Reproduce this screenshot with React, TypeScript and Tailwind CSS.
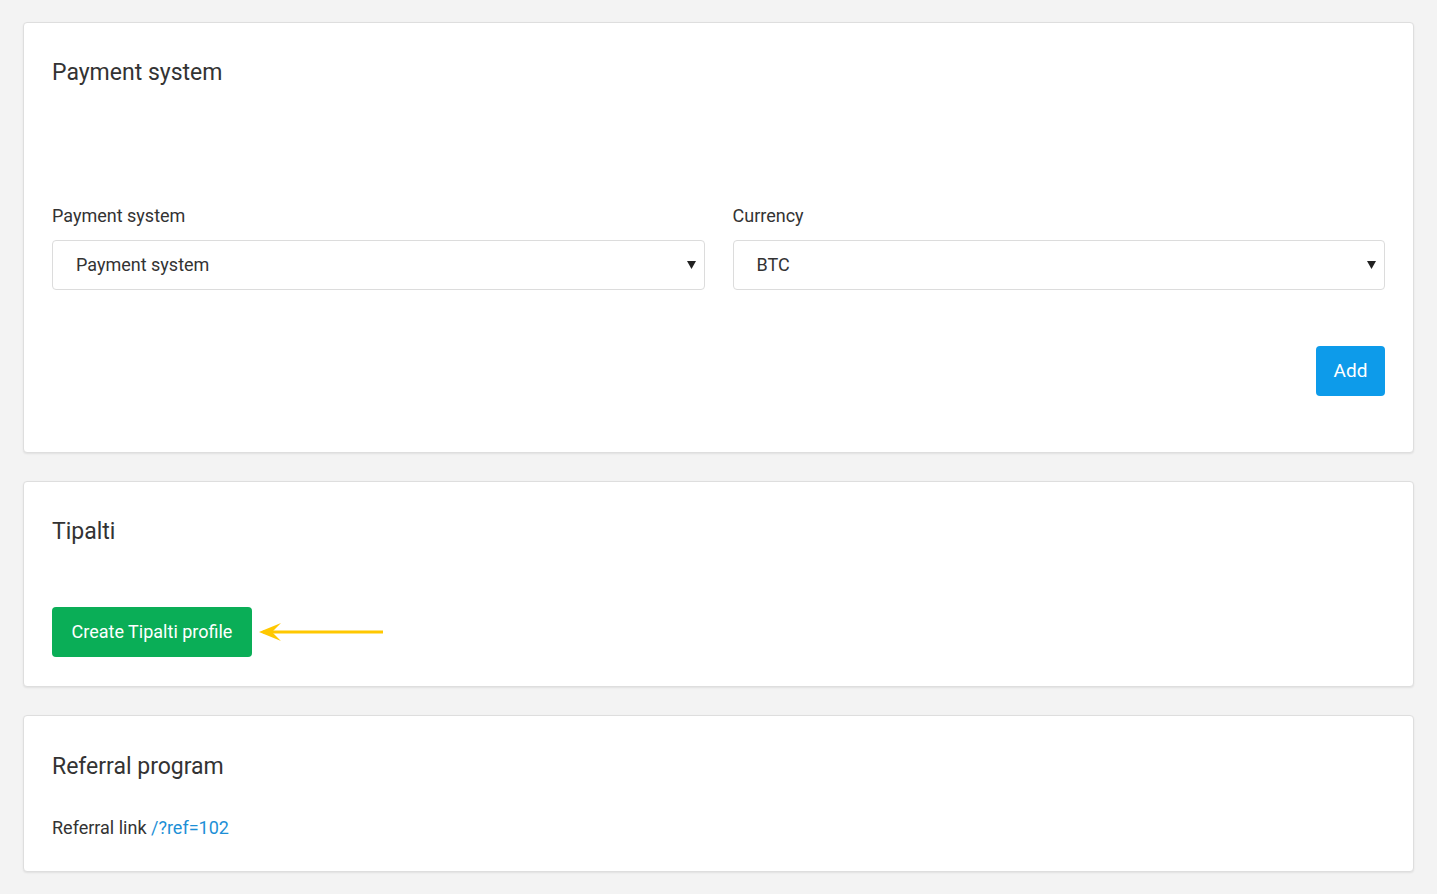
import React from "react";

const font = { fontFamily: "Roboto, 'Open Sans', Arial, sans-serif" };

function Card({ className, children }: { className: string; children: React.ReactNode }) {
  return (
    <section
      className={`bg-white border border-[#dedede] rounded-[4px] shadow-[0_1px_2px_rgba(0,0,0,0.08)] px-[28px] ${className}`}
    >
      {children}
    </section>
  );
}

function Select({ value }: { value: string }) {
  return (
    <div className="h-[50px] border border-[#dcdcdc] rounded-[4px] flex items-center justify-between pl-[23px] pr-[8px] pb-[1px] text-[18px] text-[#333]">
      <span>{value}</span>
      <svg width="9" height="8" viewBox="0 0 9 8">
        <path d="M0 0h9L4.5 8z" fill="#222" />
      </svg>
    </div>
  );
}

export default function App() {
  return (
    <div className="min-h-screen bg-[#f3f3f3] pt-[22px] pb-[22px] pl-[23px] pr-[23px]" style={font}>
      <div className="flex flex-col gap-[28px]">
        <Card className="pt-[35px] pb-[56px]">
          <h2 className="text-[23px] leading-[30px] text-[#333]">Payment system</h2>
          <div className="grid grid-cols-2 gap-[28px] mt-[116px]">
            <div>
              <label className="block text-[18px] leading-[24px] text-[#333] mb-[12px]">Payment system</label>
              <Select value="Payment system" />
            </div>
            <div>
              <label className="block text-[18px] leading-[24px] text-[#333] mb-[12px]">Currency</label>
              <Select value="BTC" />
            </div>
          </div>
          <div className="flex justify-end mt-[56px]">
            <button className="h-[50px] w-[69px] rounded-[4px] bg-[#0d9bea] text-white text-[19px]">Add</button>
          </div>
        </Card>

        <Card className="pt-[35px] pb-[29px]">
          <h2 className="text-[23px] leading-[30px] text-[#333]">Tipalti</h2>
          <div className="flex items-center gap-[7px] mt-[60px]">
            <button className="h-[50px] w-[200px] rounded-[4px] bg-[#0aae57] text-white text-[18px] pb-[2px]">
              Create Tipalti profile
            </button>
            <svg width="124" height="20" viewBox="0 0 124 20">
              <path d="M4 10H124" stroke="#ffc800" strokeWidth="3" />
              <path d="M0 10L22 1L13 10L22 19Z" fill="#ffc800" />
            </svg>
          </div>
        </Card>

        <Card className="pt-[36px] pb-[31px]">
          <h2 className="text-[23px] leading-[30px] text-[#333]">Referral program</h2>
          <p className="text-[18px] leading-[24px] text-[#333] mt-[34px]">
            Referral link <a className="text-[#1d8fd6]">/?ref=102</a>
          </p>
        </Card>
      </div>
    </div>
  );
}
